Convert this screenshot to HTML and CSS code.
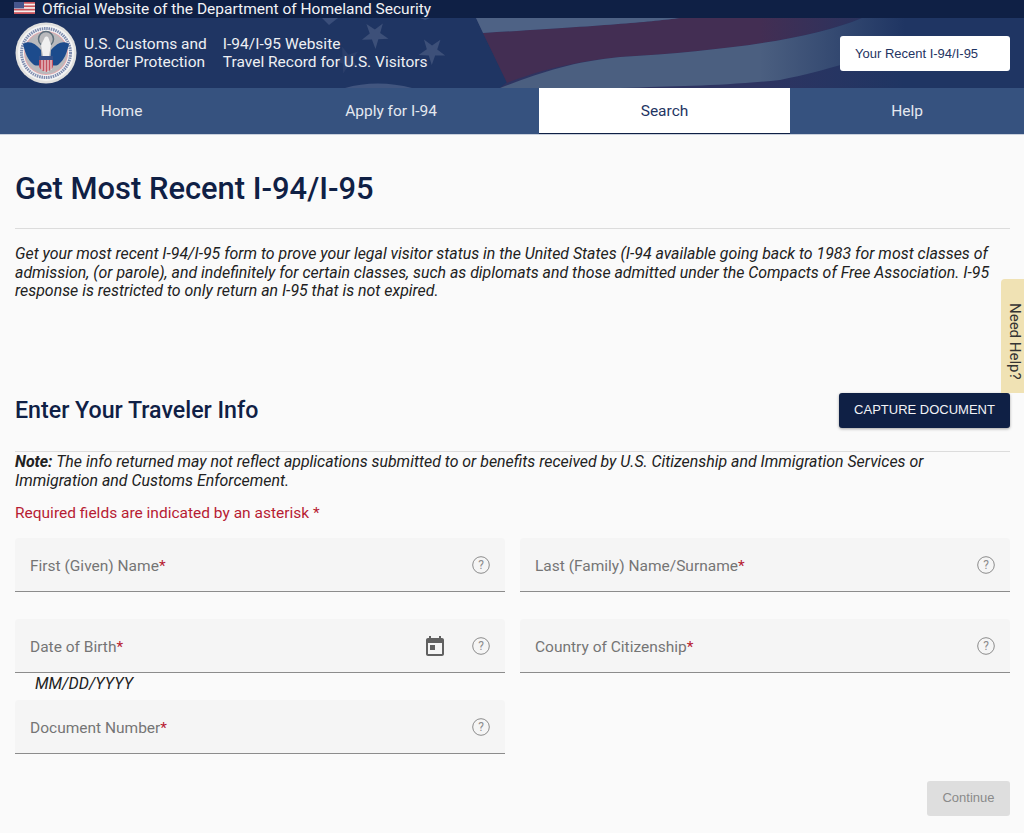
FILE: index.html
```html
<!DOCTYPE html>
<html lang="en">
<head>
    <meta charset="UTF-8">
    <meta name="viewport" content="width=device-width, initial-scale=1.0">
    <title>Get Most Recent I-94/I-95</title>
    <link rel="stylesheet" href="styles.css">
</head>
<body>

    <!-- Official banner -->
    <div class="official-bar">
        <svg class="flag" width="21" height="12" viewBox="0 0 21 12">
            <rect width="21" height="12" fill="#f4f0ee"/>
            <rect width="21" height="1.7" fill="#c9545c"/>
            <rect y="3.4" width="21" height="1.7" fill="#c9545c"/>
            <rect y="6.8" width="21" height="1.7" fill="#c9545c"/>
            <rect y="10.2" width="21" height="1.8" fill="#c9545c"/>
            <rect width="10" height="6.4" fill="#46568c"/>
        </svg>
        <span>Official Website of the Department of Homeland Security</span>
    </div>

    <!-- Header -->
    <header class="site-header">
        <svg class="flag-art" width="1024" height="70" viewBox="0 0 1024 70">
            <defs>
                <linearGradient id="fadeRight" gradientUnits="userSpaceOnUse" x1="760" x2="905" y1="0" y2="0">
                    <stop offset="0" stop-color="#1f3563" stop-opacity="0"/>
                    <stop offset="1" stop-color="#1f3563" stop-opacity="1"/>
                </linearGradient>
                <polygon id="star" points="0,-14 3.200,-4.500 13.300,-4.300 5.200,1.700 8.200,11.300 0,5.500 -8.200,11.300 -5.200,1.700 -13.300,-4.300 -3.200,-4.500"/>
            </defs>
            <!-- stripes -->
            <path d="M500 70 L507 64 L483 15 L476 0 H905 V70 Z" fill="#2e3461"/>
            <path d="M483 15 C600 8 650 4 680 0 H862 C810 22 720 33 620 39 C570 44 535 54 507 65 Z" fill="#432e53"/>
            <path d="M476 0 H680 C650 4 600 8 483 15 Z" fill="#4e6285"/>
            <path d="M500 70 C540 55 570 44 620 39 C720 33 810 22 862 0 H905 V30 C860 40 830 52 780 62 C720 68 680 68 620 70 Z" fill="#4b5f80"/>
            <rect x="760" width="146" height="70" fill="url(#fadeRight)"/>
            <!-- stars -->
            <use href="#star" transform="translate(375 17) rotate(34)" fill="#3d5079"/>
            <use href="#star" transform="translate(432 33) rotate(-35)" fill="#3d5079"/>
            <use href="#star" transform="translate(347 42) rotate(-20)" fill="#2b3f6b"/>
            <path d="M322 0 H338 L329 7 Z" fill="#3a4e7a"/>
            <path d="M420 0 H430 L425 2 Z" fill="#3a4e7a"/>
            <path d="M345 70 C365 64 390 64 412 70 Z" fill="#41557f"/>
        </svg>

        <div class="brand">
            <svg class="seal" width="62" height="62" viewBox="0 0 62 62">
                <circle cx="31" cy="31" r="30.500" fill="#e2e1df"/>
                <circle cx="31" cy="31" r="28" fill="#f4f4f4"/>
                <circle cx="31" cy="31" r="24.500" fill="none" stroke="#7f8db0" stroke-width="3" stroke-dasharray="1.500 0.800"/>
                <circle cx="31" cy="31" r="22" fill="#e3a9ae"/>
                <circle cx="31" cy="31" r="21" fill="#b9b9bc"/>
                <circle cx="31" cy="17" r="7.500" fill="none" stroke="#5d6f7c" stroke-width="1.500"/>
                <path d="M8 22 C14 18 20 21 26 28 L27 42 C24 44 20 44 18 42 C13 38 10 31 8 22 Z" fill="#1c4b8c"/>
                <path d="M54 22 C48 18 42 21 36 28 L35 42 C38 44 42 44 44 42 C49 38 52 31 54 22 Z" fill="#1c4b8c"/>
                <path d="M29.500 16 C30 14 33 14 33.500 16 L36 23 L34 34 H28 L26 23 Z" fill="#f0f0f0"/>
                <path d="M24 34 H38 V44 C38 47 34 49 31 50 C28 49 24 47 24 44 Z" fill="#c4505e"/>
                <path d="M24 34 H38 V38 H24 Z" fill="#34508a"/>
                <path d="M27 38 V48 M30 38 V50 M33 38 V50 M36 38 V48" stroke="#f2f2f2" stroke-width="1"/>
            </svg>
            <div class="brand-text">U.S. Customs and<br>Border Protection</div>
            <div class="brand-text site-name">I-94/I-95 Website<br>Travel Record for U.S. Visitors</div>
        </div>
        <a class="recent-btn" href="#">Your Recent I-94/I-95</a>
    </header>

    <!-- Main navigation -->
    <nav class="main-nav">
        <a href="#">Home</a>
        <a href="#">Apply for I-94</a>
        <a class="active" href="#">Search</a>
        <a href="#">Help</a>
    </nav>

    <main class="content">
        <h1>Get Most Recent I-94/I-95</h1>
        <p class="intro">Get your most recent I-94/I-95 form to prove your legal visitor status in the United States (I-94 available going back to 1983 for most classes of admission, (or parole), and indefinitely for certain classes, such as diplomats and those admitted under the Compacts of Free Association. I-95 response is restricted to only return an I-95 that is not expired.</p>

        <div class="section-head">
            <h2>Enter Your Traveler Info</h2>
            <button class="capture-btn" type="button">CAPTURE DOCUMENT</button>
        </div>

        <p class="note"><b>Note:</b> The info returned may not reflect applications submitted to or benefits received by U.S. Citizenship and Immigration Services or Immigration and Customs Enforcement.</p>
        <p class="required">Required fields are indicated by an asterisk *</p>

        <form class="traveler-form" onsubmit="return false">
            <div class="field">
                <span class="field-label">First (Given) Name<i>*</i></span>
                <svg class="help-icon" width="20" height="20" viewBox="0 0 20 20"><circle cx="10" cy="10" r="8.300"/><text x="10" y="14" text-anchor="middle">?</text></svg>
            </div>
            <div class="field">
                <span class="field-label">Last (Family) Name/Surname<i>*</i></span>
                <svg class="help-icon" width="20" height="20" viewBox="0 0 20 20"><circle cx="10" cy="10" r="8.300"/><text x="10" y="14" text-anchor="middle">?</text></svg>
            </div>
            <div class="field-wrap">
                <div class="field">
                    <span class="field-label">Date of Birth<i>*</i></span>
                    <svg class="calendar-icon" width="24" height="24" viewBox="0 0 24 24"><path d="M19 4h-1V2h-2v2H8V2H6v2H5c-1.100 0-2 .9-2 2v14c0 1.100.9 2 2 2h14c1.100 0 2-.9 2-2V6c0-1.100-.9-2-2-2zm0 16H5V9h14v11zM7 11h5v5H7z"/></svg>
                    <svg class="help-icon" width="20" height="20" viewBox="0 0 20 20"><circle cx="10" cy="10" r="8.300"/><text x="10" y="14" text-anchor="middle">?</text></svg>
                </div>
                <div class="field-hint">MM/DD/YYYY</div>
            </div>
            <div class="field">
                <span class="field-label">Country of Citizenship<i>*</i></span>
                <svg class="help-icon" width="20" height="20" viewBox="0 0 20 20"><circle cx="10" cy="10" r="8.300"/><text x="10" y="14" text-anchor="middle">?</text></svg>
            </div>
            <div class="field">
                <span class="field-label">Document Number<i>*</i></span>
                <svg class="help-icon" width="20" height="20" viewBox="0 0 20 20"><circle cx="10" cy="10" r="8.300"/><text x="10" y="14" text-anchor="middle">?</text></svg>
            </div>
        </form>

        <div class="form-actions">
            <button class="continue-btn" type="button" disabled>Continue</button>
        </div>
    </main>

    <a class="need-help" href="#">Need Help?</a>

</body>
</html>
```

FILE: styles.css
```css
* {
    box-sizing: border-box;
}

html, body {
    height: 100%;
}

body {
    margin: 0;
    height: 833px;
    overflow: hidden;
    position: relative;
    font-family: Roboto, "Liberation Sans", Arial, sans-serif;
    background-color: #fafafa;
    color: #212121;
}

.official-bar {
    height: 18px;
    padding-left: 14px;
    display: flex;
    align-items: center;
    gap: 7px;
    background-color: #0f2045;
    color: #f2f3f6;
    font-size: 15.500px;
    line-height: 19px;
}

.official-bar span {
    padding-top: 1px;
}

.flag {
    flex: none;
    margin-top: -3px;
}

.site-header {
    position: relative;
    height: 70px;
    padding: 0 14px 0 15px;
    display: flex;
    align-items: center;
    justify-content: space-between;
    background-color: #1f3563;
    overflow: hidden;
}

.flag-art {
    position: absolute;
    top: 0;
    left: 0;
}

.brand {
    position: relative;
    display: flex;
    align-items: center;
}

.seal {
    flex: none;
    margin-right: 7px;
}

.brand-text {
    color: #eef0f4;
    font-size: 15.500px;
    line-height: 18px;
}

.site-name {
    margin-left: 16px;
}

.recent-btn {
    position: relative;
    width: 170px;
    height: 35px;
    margin-top: 1px;
    padding-left: 15px;
    display: flex;
    align-items: center;
    background: white;
    border-radius: 3px;
    color: #1f3563;
    font-family: "Liberation Sans", Arial, sans-serif;
    font-size: 13px;
    text-decoration: none;
}

.main-nav {
    height: 47px;
    display: grid;
    grid-template-columns: 243px 296px 251px 234px;
    background-color: #36527f;
    border-bottom: 1px solid #c9d0dc;
}

.main-nav a {
    height: 46px;
    display: flex;
    align-items: center;
    justify-content: center;
    color: #e4e8ef;
    font-size: 15.500px;
    text-decoration: none;
}

.main-nav a.active {
    background: white;
    border-bottom: 1px solid #0f2045;
    color: #1f3563;
}

.content {
    padding: 0 14px 0 15px;
}

h1 {
    margin: 0;
    height: 94px;
    padding-top: 35px;
    border-bottom: 1px solid #dcdcdc;
    color: #0f2045;
    font-size: 30.900px;
    font-weight: 500;
    line-height: 37px;
}

.intro {
    margin: 16px 0 0;
    height: 147px;
    font-size: 15.900px;
    font-style: italic;
    line-height: 18.500px;
}

.section-head {
    height: 60px;
    display: flex;
    align-items: flex-start;
    justify-content: space-between;
    border-bottom: 1px solid #dcdcdc;
}

h2 {
    margin: 0;
    padding-top: 3px;
    color: #0f2045;
    font-size: 23.200px;
    font-weight: 500;
    line-height: 30px;
}

.capture-btn {
    width: 171px;
    height: 35px;
    margin-top: 1px;
    padding: 0 0 2px;
    border: none;
    border-radius: 3px;
    background-color: #0f2045;
    box-shadow: 0 1px 3px rgba(0, 0, 0, 0.35);
    color: #f2f3f6;
    font-family: "Liberation Sans", Arial, sans-serif;
    font-size: 13px;
}

.note {
    margin: 0;
    padding-top: 1px;
    font-size: 15.900px;
    font-style: italic;
    line-height: 18.500px;
}

.required {
    margin: 14px 0 0;
    color: #b71c33;
    font-size: 15.500px;
    line-height: 18px;
}

.traveler-form {
    margin-top: 16px;
    display: grid;
    grid-template-columns: 490px 490px;
    column-gap: 15px;
    row-gap: 27px;
    align-items: start;
}

.field {
    height: 54px;
    padding: 0 14px 0 15px;
    display: flex;
    align-items: center;
    gap: 25px;
    background-color: #f5f5f5;
    border-bottom: 1px solid #8c8c8c;
    border-radius: 4px 4px 0 0;
}

.field-wrap {
    height: 54px;
}

.field-label {
    flex: 1;
    color: #757575;
    font-size: 15.500px;
    padding-top: 3px;
}

.field-label i {
    color: #b71c33;
    font-style: normal;
}

.help-icon {
    flex: none;
}

.help-icon circle {
    fill: none;
    stroke: #8c8c8c;
    stroke-width: 1;
}

.help-icon text {
    fill: #8c8c8c;
    font-size: 12px;
}

.calendar-icon {
    flex: none;
    margin-right: -1px;
    fill: #616161;
}

.field-hint {
    padding: 2px 0 0 20px;
    font-size: 16px;
    font-style: italic;
    line-height: 18px;
}

.form-actions {
    margin-top: 27px;
    display: flex;
    justify-content: flex-end;
}

.continue-btn {
    width: 83px;
    height: 35px;
    padding: 0 0 2px;
    border: none;
    border-radius: 3px;
    background-color: #dedede;
    color: #8a8a8a;
    font-family: "Liberation Sans", Arial, sans-serif;
    font-size: 13px;
}

.need-help {
    position: absolute;
    top: 279px;
    right: 0;
    width: 23px;
    height: 114px;
    padding: 10px 0 0 5px;
    display: flex;
    align-items: center;
    justify-content: center;
    background-color: #f0e2b4;
    border-radius: 4px 0 0 0;
    color: #333333;
    font-size: 15px;
    text-decoration: none;
    writing-mode: vertical-rl;
}
```
